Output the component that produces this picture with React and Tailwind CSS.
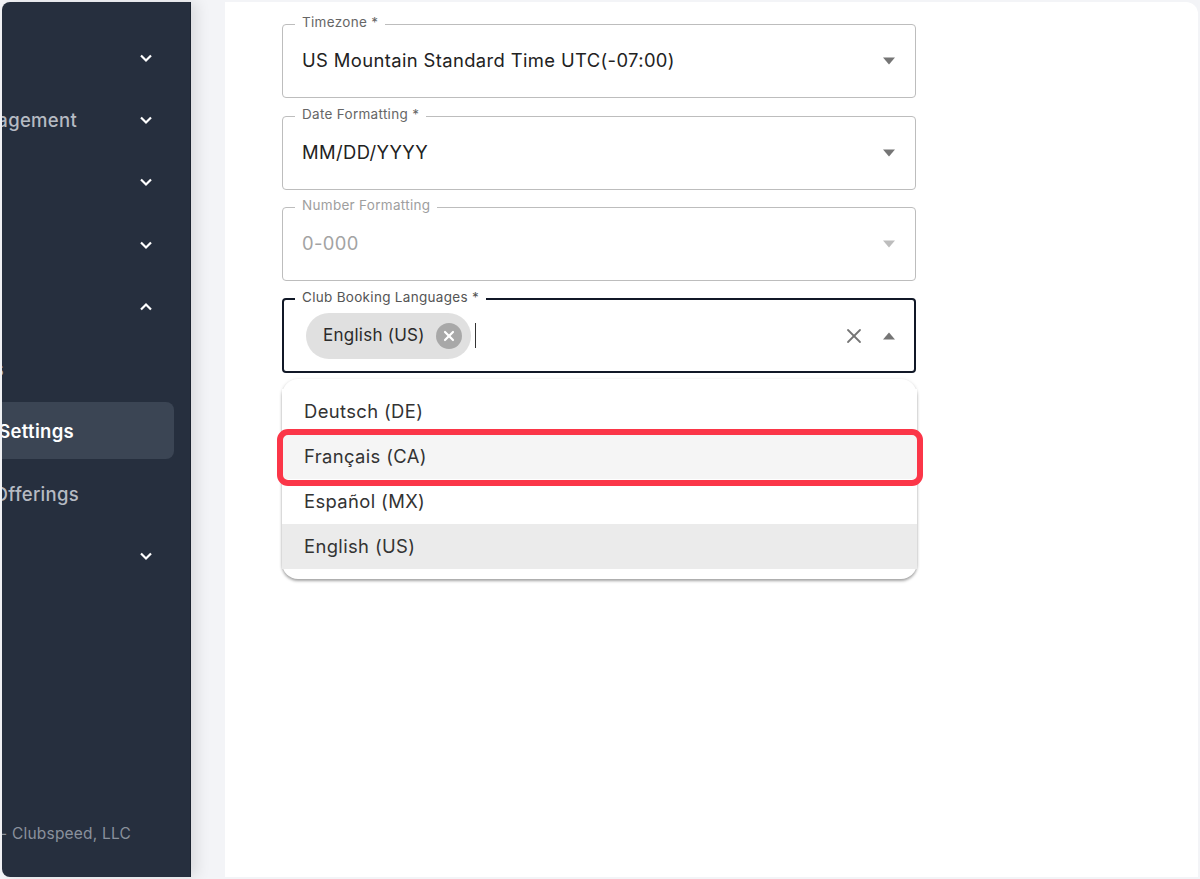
import React from 'react';
import { X } from 'lucide-react';

const font = 'font-["Inter",sans-serif]';

const navRows = [
  { label: '', icon: 'down' },
  { label: 'Management', icon: 'down' },
  { label: '', icon: 'down' },
  { label: '', icon: 'down' },
  { label: '', icon: 'up' }
];

const Chevron = ({ up }) => (
  <svg width="14" height="10" viewBox="0 0 14 10" fill="none" className="absolute left-[137px] top-1/2 -translate-y-1/2">
    <path d={up ? 'M2 7.5 7 2.5 12 7.5' : 'M2 2.5 7 7.5 12 2.5'} stroke="#ffffff" strokeWidth="2.2" />
  </svg>
);

const NavRow = ({ label, icon, active, width = 75 }) => (
  <div className="relative h-[62.2px] flex items-center">
    {active && <div className="absolute left-0 w-[172px] top-[2px] h-[57px] bg-[#3b4554] rounded-r-lg" />}
    {label && (
      <div
        className={`relative pt-[2px] flex justify-end overflow-hidden whitespace-nowrap text-[18.5px] tracking-[0.3px] ${active ? 'font-semibold text-white' : 'font-medium text-[#b6bbc3]'}`}
        style={{ width }}
      >
        <span className="shrink-0">{label}</span>
      </div>
    )}
    {icon && <Chevron up={icon === 'up'} />}
  </div>
);

const Caret = ({ up, muted, right = 'right-[19px]' }) => (
  <svg width="14" height="8" viewBox="0 0 14 8" className={`absolute top-1/2 -translate-y-1/2 ${right}`}>
    <path d={up ? 'M1 7.5 7 .5l6 7z' : 'M1 .5l6 7 6-7z'} fill={muted ? '#bdbdbd' : '#757575'} />
  </svg>
);

const Field = ({ label, value, disabled }) => (
  <div className="relative h-[74px] rounded border border-[#bdbdbd] bg-white flex items-center pl-[19px]">
    <span className={`absolute -top-[12px] left-[12px] bg-white px-[7px] text-[13.5px] leading-[18px] tracking-[0.3px] ${disabled ? 'text-[#9e9e9e]' : 'text-[#666666]'}`}>
      {label}
    </span>
    <span className={`text-[18.4px] tracking-[0.38px] ${disabled ? 'text-[#a3a3a3]' : 'text-[#222222]'}`}>{value}</span>
    <Caret muted={disabled} />
  </div>
);

const options = [
  { label: 'Deutsch (DE)', bg: 'bg-white' },
  { label: 'Français (CA)', bg: 'bg-[#f5f5f5]' },
  { label: 'Español (MX)', bg: 'bg-white' },
  { label: 'English (US)', bg: 'bg-[#ebebeb]' }
];

export default function App() {
  return (
    <div className={`h-[879px] w-[1200px] overflow-hidden bg-[#f3f4f7] p-[2px] flex ${font}`}>
      <aside className="w-[189px] shrink-0 bg-[#262f3e] rounded-l-lg flex flex-col overflow-hidden pt-[25px] pb-[32px] border-r border-[#1c2430] shadow-[6px_0_14px_rgba(0,0,0,0.1)] z-10">
        {navRows.map((row, i) => (
          <NavRow key={i} {...row} />
        ))}
        <NavRow label="s" width={2} />
        <NavRow label="Settings" width={72} active />
        <NavRow label="Offerings" width={77} />
        <NavRow icon="down" />
        <div className="mt-auto flex justify-end overflow-hidden whitespace-nowrap w-[129px] text-[15.5px] tracking-[0.2px] text-[#8a919c]">
          <span className="shrink-0">- Clubspeed, LLC</span>
        </div>
      </aside>

      <main className="ml-[34px] flex-1 bg-white rounded-tr-xl pl-[57px] pt-[22.3px] relative">
        <div className="w-[634px] flex flex-col gap-[17.3px]">
          <Field label="Timezone *" value="US Mountain Standard Time UTC(-07:00)" />
          <Field label="Date Formatting *" value="MM/DD/YYYY" />
          <Field label="Number Formatting" value="0-000" disabled />

          <div className="relative h-[75px] rounded border-2 border-[#111827] bg-white flex items-center pl-[22px]">
            <span className="absolute -top-[12px] left-[11px] bg-white px-[7px] text-[13.5px] leading-[18px] tracking-[0.3px] text-[#555555]">
              Club Booking Languages *
            </span>
            <div className="h-[46px] w-[165px] rounded-full bg-[#e0e0e0] flex items-center justify-between pl-[17px] pr-[9px]">
              <span className="text-[17px] tracking-[0.25px] text-[#2b2b2b]">English (US)</span>
              <span className="h-[26px] w-[26px] rounded-full bg-[#a8a8a8] flex items-center justify-center">
                <X size={16} color="#ffffff" strokeWidth={3.2} />
              </span>
            </div>
            <span className="ml-[4px] h-[25px] w-px bg-[#333333]" />
            <X size={24} color="#757575" strokeWidth={1.8} className="absolute right-[48px] top-1/2 -translate-y-1/2" />
            <Caret up right="right-[18px]" />
          </div>
        </div>

        <div className="relative mt-[6px] w-[635px] rounded-2xl bg-white py-[10px] shadow-[0_2px_3px_rgba(0,0,0,0.35),0_0_4px_rgba(0,0,0,0.06)]">
          {options.map((o) => (
            <div key={o.label} className={`h-[45px] flex items-center pl-[22px] text-[18.4px] tracking-[0.38px] text-[#333333] ${o.bg}`}>
              {o.label}
            </div>
          ))}
          <div className="absolute -left-[5px] top-[50px] w-[646px] h-[57px] rounded-[11px] border-[6px] border-[#fb3648]" />
        </div>
      </main>
    </div>
  );
}
